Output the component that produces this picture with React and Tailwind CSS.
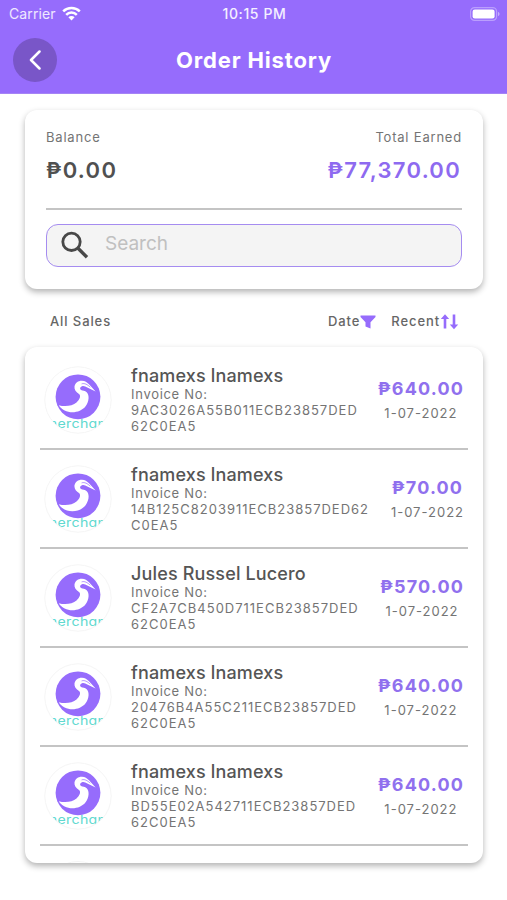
import React from "react";

const orders = [
  { name: "fnamexs lnamexs", lines: ["9AC3026A55B011ECB23857DED", "62C0EA5"], amount: "₱640.00", date: "1-07-2022" },
  { name: "fnamexs lnamexs", lines: ["14B125C8203911ECB23857DED62", "C0EA5"], amount: "₱70.00", date: "1-07-2022" },
  { name: "Jules Russel Lucero", lines: ["CF2A7CB450D711ECB23857DED", "62C0EA5"], amount: "₱570.00", date: "1-07-2022" },
  { name: "fnamexs lnamexs", lines: ["20476B4A55C211ECB23857DED", "62C0EA5"], amount: "₱640.00", date: "1-07-2022" },
  { name: "fnamexs lnamexs", lines: ["BD55E02A542711ECB23857DED", "62C0EA5"], amount: "₱640.00", date: "1-07-2022" },
];

function StatusBar() {
  return (
    <div className="flex h-7 items-center justify-between pl-[9px] pr-[7px] text-[14px] leading-none text-white">
      <div className="flex w-40 items-center gap-[6px]">
        <span className="tracking-[0.1px] text-white/85">Carrier</span>
        <svg width="19" height="15" viewBox="0 0 19 15" fill="none" stroke="#fff" strokeWidth="2.5" className="-mt-[2px]">
          <path d="M1.200 5.400A11.800 11.800 0 0 1 17.800 5.400" />
          <path d="M4.200 8.800A7.400 7.400 0 0 1 14.800 8.800" />
          <path d="M6.400 11.300A4.200 4.200 0 0 1 12.600 11.300L9.500 14.500Z" fill="#fff" stroke="none" />
        </svg>
      </div>
      <span className="text-[14px] font-medium tracking-[0.600px] text-white/90">10:15 PM</span>
      <div className="flex w-40 justify-end">
        <svg width="31" height="14" viewBox="0 0 31 14" className="-mt-[1px]">
          <rect x="1.600" y="0.600" width="26" height="12.800" rx="4" fill="none" stroke="#fff" strokeOpacity="0.35" strokeWidth="1.2" />
          <rect x="3.600" y="2.500" width="22" height="9" rx="2.200" fill="#fff" />
          <path d="M29 5v4c1-.4 1.500-1.100 1.500-2s-.5-1.600-1.500-2z" fill="#fff" fillOpacity="0.45" />
        </svg>
      </div>
    </div>
  );
}

function Avatar() {
  return (
    <svg width="68" height="68" viewBox="0 0 68 68" className="block">
      <defs>
        <clipPath id="avatar-clip">
          <circle cx="34" cy="34" r="33" />
        </clipPath>
      </defs>
      <circle cx="34" cy="34" r="33.2" fill="#fff" stroke="#f5f5f5" strokeWidth="1" />
      <g clipPath="url(#avatar-clip)">
        <text
          transform="translate(34 62.300) scale(1.180 1)"
          textAnchor="middle"
          fontSize="12"
          letterSpacing="0.300"
          fill="#61d9cf"
          className="[font-feature-settings:'cv11']"
        >
          merchant
        </text>
        <circle cx="34" cy="30.800" r="22.400" fill="#966cfc" />
        <path
          d="M14.800 39.200C21 41 28.500 40 32.500 36.500C35.700 33.600 37 30.300 35.300 28.300C32 26.300 30 23.500 30.500 20.300C31.200 16.700 34.500 14.500 38 14.700C41 14.900 43 16.200 45 18.200L51.600 25.500L43.300 21.500C41.500 20.400 39.700 19.800 38 20.300C36 21 35.400 23 37 24.100C38.700 24.800 41 24.700 42.700 26.200C45.600 29 45.200 35.500 41.600 40.200C35.500 48.200 20.500 48.500 14.800 39.200Z"
          fill="#fff"
        />
        <path d="M37.600 17.900C40.500 16.800 43.500 18.600 46.300 21.200" fill="none" stroke="#966cfc" strokeWidth="0.700" />
      </g>
    </svg>
  );
}

function OrderRow({ order }) {
  return (
    <div className="flex h-[99px] shrink-0 border-b-2 border-[#c4c4c4]">
      <div className="w-[91px] shrink-0 pl-[4px] pt-[15px]">
        <Avatar />
      </div>
      <div className="w-[240px] shrink-0 whitespace-nowrap pt-[14px]">
        <div className="h-[21px] text-[18px] font-medium leading-[22px] tracking-[0.150px] text-[#555]">{order.name}</div>
        <div className="text-[13px] leading-[16px] text-[#747474]">
          <div className="tracking-[0.700px]">Invoice No:</div>
          {order.lines.map((line) => (
            <div key={line} className="tracking-[0.990px]">{line}</div>
          ))}
        </div>
      </div>
      <div className="flex flex-1 flex-col items-end whitespace-nowrap pr-[4px] pt-[27px]">
        <div className="flex flex-col items-center">
          <div className="text-[18px] font-bold leading-[22px] tracking-[1.150px] text-[#9070ee]">{order.amount}</div>
          <div className="mt-[5px] text-[13px] leading-[16px] tracking-[1px] text-[#747474]">{order.date}</div>
        </div>
      </div>
    </div>
  );
}

export default function App() {
  return (
    <div className="flex h-[900px] w-[507px] flex-col overflow-hidden bg-white font-['Inter',sans-serif]">
      <header className="h-[94px] shrink-0 border-b border-[#a584f5] bg-[#966cfc]">
        <StatusBar />
        <div className="flex items-center pl-[13px] pr-[56px] pt-[10px]">
          <button className="flex h-11 w-11 items-center justify-center rounded-full bg-[#7956c8]">
            <svg width="14" height="20" viewBox="0 0 14 20" fill="none" stroke="#fff" strokeWidth="2.500" strokeLinecap="round" strokeLinejoin="round">
              <path d="M11.500 1.500L3 10L11.500 18.500" />
            </svg>
          </button>
          <h1 className="flex-1 text-center text-[22px] font-bold leading-[28px] tracking-[0.850px] text-white">Order History</h1>
        </div>
      </header>

      <section className="ml-[25px] mr-[24px] mt-[16px] h-[179px] shrink-0 rounded-xl bg-white px-[21px] pt-[18px] shadow-[0_3px_6px_rgba(0,0,0,0.3)]">
        <div className="flex justify-between text-[13px] leading-[18px] tracking-[0.800px] text-[#747474]">
          <span>Balance</span>
          <span>Total Earned</span>
        </div>
        <div className="mt-[10px] flex justify-between text-[22px] font-semibold leading-[28px] tracking-[1.300px]">
          <span className="text-[#505050]">₱0.00</span>
          <span className="pr-px text-[#8e6af0]">₱77,370.00</span>
        </div>
        <div className="mt-[24px] h-[2px] bg-[#c4c4c4]" />
        <div className="mt-[14px] flex h-[43px] items-center rounded-xl border-[1.500px] border-[#a58cf0] bg-[#f4f4f4] pl-[14px]">
          <svg width="28" height="28" viewBox="0 0 28 28" fill="none" stroke="#484848" strokeWidth="2.800" className="-mt-[2px]">
            <circle cx="10.500" cy="10.800" r="8.700" />
            <path d="M16.500 16.800L26 26.300" strokeWidth="3.400" />
          </svg>
          <span className="-mt-[3px] ml-[16px] text-[19px] leading-[24px] text-[#c0c0c0]">Search</span>
        </div>
      </section>

      <div className="flex h-[58px] shrink-0 items-center pl-[50px] pr-[48px] pt-[8px] text-[13px] font-medium tracking-[0.900px] text-[#666]">
        <span>All Sales</span>
        <span className="ml-auto">Date</span>
        <svg width="16" height="14" viewBox="0 0 16 14" fill="#966cfc">
          <path d="M.5 .5H15.500V2L10.500 7.300V13.500L5.500 11.500V7.300L.5 2Z" />
        </svg>
        <span className="ml-[15px]">Recent</span>
        <svg width="19" height="18" viewBox="0 0 19 18" fill="none" stroke="#966cfc" strokeWidth="2.600">
          <path d="M5 15.500V4M14 1.500V13" />
          <path d="M.8 6L5 1.300L9.200 6ZM9.800 11.500H18.200L14 16.200Z" fill="#966cfc" stroke="none" />
        </svg>
      </div>

      <section className="ml-[25px] mr-[24px] flex h-[516px] shrink-0 flex-col overflow-hidden rounded-xl bg-white pl-[15px] pr-[15px] pt-[4px] shadow-[0_3px_6px_rgba(0,0,0,0.3)]">
        {orders.map((order) => (
          <OrderRow key={order.lines[0]} order={order} />
        ))}
        <div className="mt-[15px] flex justify-start pl-[4px]">
          <div className="h-[68px] w-[68px] shrink-0 rounded-full border border-[#f5f5f5]" />
        </div>
      </section>
    </div>
  );
}
